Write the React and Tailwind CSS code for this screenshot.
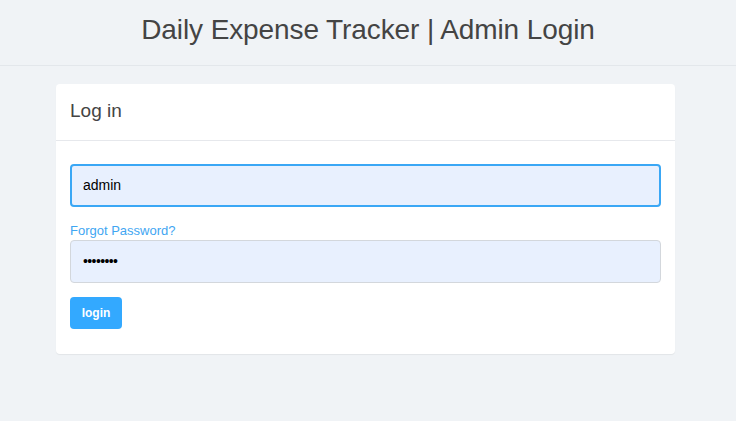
export default function App() {
  return (
    <div className="min-h-[421px] bg-[#f0f3f6]" style={{ fontFamily: '"Liberation Sans", Arial, sans-serif' }}>
      <div className="h-[66px] border-b border-[#e3e7eb] flex items-center justify-center">
        <h1 className="text-[28px] leading-none text-[#444] mt-[-6px] tracking-[-0.1px]">Daily Expense Tracker | Admin Login</h1>
      </div>
      <div className="pt-[18px] px-[56px] pr-[61px]">
        <div className="bg-white rounded-[4px] shadow-[0_1px_1px_rgba(0,0,0,0.06)]">
          <div className="h-[57px] border-b border-[#e6e8ec] flex items-center px-[14px]">
            <span className="text-[19px] text-[#444] mt-[-2px]">Log in</span>
          </div>
          <div className="px-[14px] pt-[23px] pb-[25px]">
            <div className="h-[43px] rounded-[4px] border-2 border-[#3aa7f5] bg-[#e8f0fe] flex items-center px-[11px]">
              <span className="text-[14px] text-black">admin</span>
            </div>
            <div className="mt-[14px] text-[13px] leading-[19px] text-[#3fa6f2]">Forgot Password?</div>
            <div className="h-[43px] rounded-[4px] border border-[#d3d7dc] bg-[#e8f0fe] flex items-center px-[12px]">
              <span className="text-[14px] text-black tracking-[-0.6px]">••••••••</span>
            </div>
            <button className="mt-[14px] h-[32px] w-[52px] rounded-[4px] bg-[#33a9ff] text-white text-[12px] font-bold flex items-center justify-center">login</button>
          </div>
        </div>
      </div>
    </div>
  );
}
